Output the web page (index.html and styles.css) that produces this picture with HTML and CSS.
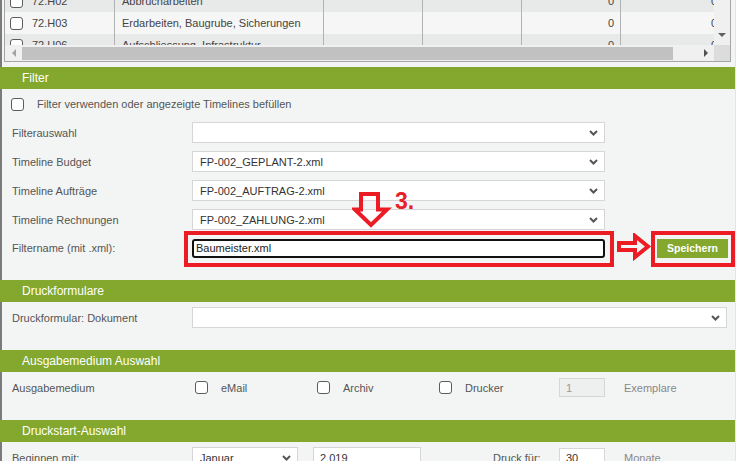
FILE: index.html
```html
<!DOCTYPE html>
<html lang="de">

<head>
    <meta charset="UTF-8">
    <title>Druckauswahl</title>
    <link rel="stylesheet" href="styles.css">
</head>

<body>
    <div class="page">

        <!-- Kostengruppen (gescrollt) -->
        <div class="grid-panel">
            <div class="grid-view">
                <div class="grid-rows">
                    <div class="grid-row">
                        <span class="c-code"><i class="box"></i>72.H02</span>
                        <span>Abbrucharbeiten</span>
                        <span></span>
                        <span></span>
                        <span class="c-num">0</span>
                        <span class="c-num">0</span>
                    </div>
                    <div class="grid-row alt">
                        <span class="c-code"><i class="box"></i>72.H03</span>
                        <span>Erdarbeiten, Baugrube, Sicherungen</span>
                        <span></span>
                        <span></span>
                        <span class="c-num">0</span>
                        <span class="c-num">0</span>
                    </div>
                    <div class="grid-row">
                        <span class="c-code"><i class="box"></i>72.H06</span>
                        <span>Aufschliessung, Infrastruktur</span>
                        <span></span>
                        <span></span>
                        <span class="c-num">0</span>
                        <span class="c-num">0</span>
                    </div>
                </div>
            </div>
            <div class="vscroll"><i class="tri-down"></i></div>
            <div class="hscroll">
                <span class="sb-btn"><i class="tri-left"></i></span>
                <span class="thumb"></span>
                <span class="sb-fill"></span>
                <span class="sb-btn"><i class="tri-right"></i></span>
            </div>
            <div class="corner"></div>
        </div>

        <!-- Filter -->
        <div class="bar">Filter</div>
        <div class="section-body filter-body">
            <div class="check-row">
                <i class="box"></i>
                <span class="check-label">Filter verwenden oder angezeigte Timelines befüllen</span>
            </div>
            <div class="form-row">
                <span class="label">Filterauswahl</span>
                <div class="select"><span></span><svg class="chev" width="9" height="6" viewBox="0 0 9 6"><path d="M1 1 L4.5 4.5 L8 1"/></svg></div>
            </div>
            <div class="form-row">
                <span class="label">Timeline Budget</span>
                <div class="select"><span>FP-002_GEPLANT-2.xml</span><svg class="chev" width="9" height="6" viewBox="0 0 9 6"><path d="M1 1 L4.5 4.5 L8 1"/></svg></div>
            </div>
            <div class="form-row">
                <span class="label">Timeline Aufträge</span>
                <div class="select"><span>FP-002_AUFTRAG-2.xml</span><svg class="chev" width="9" height="6" viewBox="0 0 9 6"><path d="M1 1 L4.5 4.5 L8 1"/></svg></div>
            </div>
            <div class="form-row">
                <span class="label">Timeline Rechnungen</span>
                <div class="select"><span>FP-002_ZAHLUNG-2.xml</span><svg class="chev" width="9" height="6" viewBox="0 0 9 6"><path d="M1 1 L4.5 4.5 L8 1"/></svg></div>
            </div>
            <div class="form-row short">
                <span class="label">Filtername (mit .xml):</span>
                <div class="text-input focus">Baumeister.xml</div>
                <button type="button" class="btn-save">Speichern</button>
            </div>

            <!-- Markierungen Schritt 3 -->
            <div class="mark mark-input"></div>
            <div class="mark mark-save"></div>
            <svg class="arrow arrow-down" width="40" height="40" viewBox="0 0 40 40">
                <polygon points="9,4 26,4 26,19.5 35,19.5 19,35 3,19.5 9,19.5"/>
            </svg>
            <span class="step">3.</span>
            <svg class="arrow arrow-right" width="40" height="28" viewBox="0 0 40 28">
                <polygon points="5,10 21,10 21,3 34,13.5 21,24 21,17 5,17"/>
            </svg>
        </div>

        <!-- Druckformulare -->
        <div class="bar">Druckformulare</div>
        <div class="section-body">
            <div class="form-row">
                <span class="label">Druckformular: Dokument</span>
                <div class="select wide"><span></span><svg class="chev" width="9" height="6" viewBox="0 0 9 6"><path d="M1 1 L4.5 4.5 L8 1"/></svg></div>
            </div>
        </div>

        <!-- Ausgabemedium -->
        <div class="bar">Ausgabemedium Auswahl</div>
        <div class="section-body">
            <div class="form-row">
                <span class="label">Ausgabemedium</span>
                <span class="option"><i class="box"></i>eMail</span>
                <span class="option"><i class="box"></i>Archiv</span>
                <span class="option last"><i class="box"></i>Drucker</span>
                <div class="text-input small disabled">1</div>
                <span class="unit">Exemplare</span>
            </div>
        </div>

        <!-- Druckstart -->
        <div class="bar">Druckstart-Auswahl</div>
        <div class="section-body">
            <div class="form-row">
                <span class="label">Beginnen mit:</span>
                <div class="select month"><span>Januar</span><svg class="chev" width="9" height="6" viewBox="0 0 9 6"><path d="M1 1 L4.5 4.5 L8 1"/></svg></div>
                <div class="text-input year">2.019</div>
                <span class="inline-label">Druck für:</span>
                <div class="text-input small">30</div>
                <span class="unit">Monate</span>
            </div>
        </div>

    </div>
</body>

</html>
```

FILE: styles.css
```css
* {
    box-sizing: border-box;
}

html,
body {
    margin: 0;
    padding: 0;
    overflow: hidden;
}

body {
    background-color: #e3e4e4;
    font-family: "Liberation Sans", Arial, Helvetica, sans-serif;
    font-size: 11px;
    color: #555;
}

.page {
    width: 735px;
    height: 461px;
    padding-left: 2px;
    background-color: #f3f5f4;
    box-shadow: inset 2px 0 0 #7b7b7b;
}

/* checkbox */
.box {
    display: inline-block;
    flex: none;
    width: 13px;
    height: 13px;
    border: 1px solid #5c5c5c;
    border-radius: 3px;
    background-color: #fff;
}

/* grid with scrollbars */
.grid-panel {
    display: grid;
    grid-template-columns: 1fr 16px;
    grid-template-rows: 45px 16px;
    width: 727px;
    height: 62px;
    margin: 0 0 5px 2px;
    border: 1px solid #a5a5a5;
    border-top: 0;
    background-color: #fff;
}

.grid-view {
    overflow: hidden;
}

.grid-rows {
    margin-top: -10px;
}

.grid-row {
    display: grid;
    grid-template-columns: 109px 209px 99px 99px 99px 103px;
    height: 22px;
    background-color: #e8e9e9;
    color: #444;
}

.grid-row.alt {
    background-color: #f5f6f5;
}

.grid-row > span {
    display: flex;
    align-items: center;
    padding: 0 7px;
    border-left: 1px solid #b2b2b2;
    white-space: nowrap;
    overflow: hidden;
}

.grid-row > .c-code {
    border-left: 0;
    padding-left: 5px;
}

.c-code .box {
    margin-right: 9px;
}

.grid-row > .c-num {
    justify-content: flex-end;
    padding-right: 6px;
}

.vscroll {
    display: flex;
    align-items: flex-end;
    justify-content: center;
    padding-bottom: 8px;
    background-color: #f0f0f0;
}

.hscroll {
    display: flex;
    align-items: center;
    background-color: #f0f0f0;
}

.sb-btn {
    display: flex;
    align-items: center;
    justify-content: center;
    width: 17px;
    height: 16px;
}

.thumb {
    width: 651px;
    height: 13px;
    background-color: #c1c1c1;
}

.sb-fill {
    flex: 1;
}

.corner {
    background-color: #dcdcdc;
}

.tri-down {
    border-left: 4px solid transparent;
    border-right: 4px solid transparent;
    border-top: 4px solid #606060;
}

.tri-left {
    border-top: 4px solid transparent;
    border-bottom: 4px solid transparent;
    border-right: 4px solid #a3a3a3;
}

.tri-right {
    border-top: 4px solid transparent;
    border-bottom: 4px solid transparent;
    border-left: 4px solid #505050;
}

/* section headers */
.bar {
    height: 22px;
    line-height: 22px;
    margin-left: -2px;
    padding-left: 22px;
    background-color: #83a82d;
    color: #fff;
    font-size: 12px;
}

.section-body {
    padding: 1px 0 18px;
}

.filter-body {
    position: relative;
}

.check-row {
    display: flex;
    align-items: center;
    height: 28px;
    padding-left: 9px;
}

.check-label {
    margin-left: 13px;
}

.form-row {
    display: flex;
    align-items: center;
    height: 29px;
}

.form-row.short {
    height: 28px;
}

.label {
    flex: none;
    width: 190px;
    padding-left: 10px;
}

/* inputs */
.select {
    display: flex;
    align-items: center;
    justify-content: space-between;
    width: 413px;
    height: 21px;
    padding: 0 6px 0 7px;
    border: 1px solid #d6d6d6;
    background-color: #fff;
    color: #333;
}

.select.wide {
    width: 535px;
}

.select.month {
    width: 106px;
}

.chev {
    flex: none;
    fill: none;
    stroke: #555;
    stroke-width: 2;
}

.text-input {
    display: flex;
    align-items: center;
    height: 19px;
    padding-left: 6px;
    border: 1px solid #d6d6d6;
    background-color: #fff;
    color: #333;
}

.text-input.focus {
    width: 413px;
    padding-left: 2px;
    border: 2px solid #111;
    border-radius: 3px;
    color: #222;
}

.text-input.small {
    width: 46px;
}

.text-input.year {
    width: 108px;
    height: 21px;
    margin-left: 15px;
}

.text-input.disabled {
    background-color: #eeefef;
    color: #999;
}

.btn-save {
    width: 71px;
    height: 19px;
    margin-left: 52px;
    padding: 0;
    border: none;
    background-color: #83a82d;
    color: #fff;
    font-family: inherit;
    font-size: 10.5px;
    font-weight: bold;
}

.option {
    display: flex;
    align-items: center;
    width: 122px;
}

.option.last {
    width: 123px;
}

.option .box {
    margin: 0 13px 0 3px;
}

.unit {
    margin-left: 19px;
    color: #888;
}

.inline-label {
    width: 66px;
    margin-left: 72px;
}

/* step markers */
.mark {
    position: absolute;
    top: 142px;
    height: 36px;
    border: 4px solid #ec1c24;
}

.mark-input {
    left: 182px;
    width: 430px;
}

.mark-save {
    left: 649px;
    width: 84px;
}

.arrow {
    position: absolute;
    fill: none;
    stroke: #ec1c24;
    stroke-width: 4;
}

.arrow-down {
    left: 350px;
    top: 101px;
}

.arrow-right {
    left: 612px;
    top: 144px;
}

.step {
    position: absolute;
    left: 393px;
    top: 101px;
    font-size: 23px;
    line-height: 23px;
    font-weight: bold;
    color: #e8202a;
}
```
